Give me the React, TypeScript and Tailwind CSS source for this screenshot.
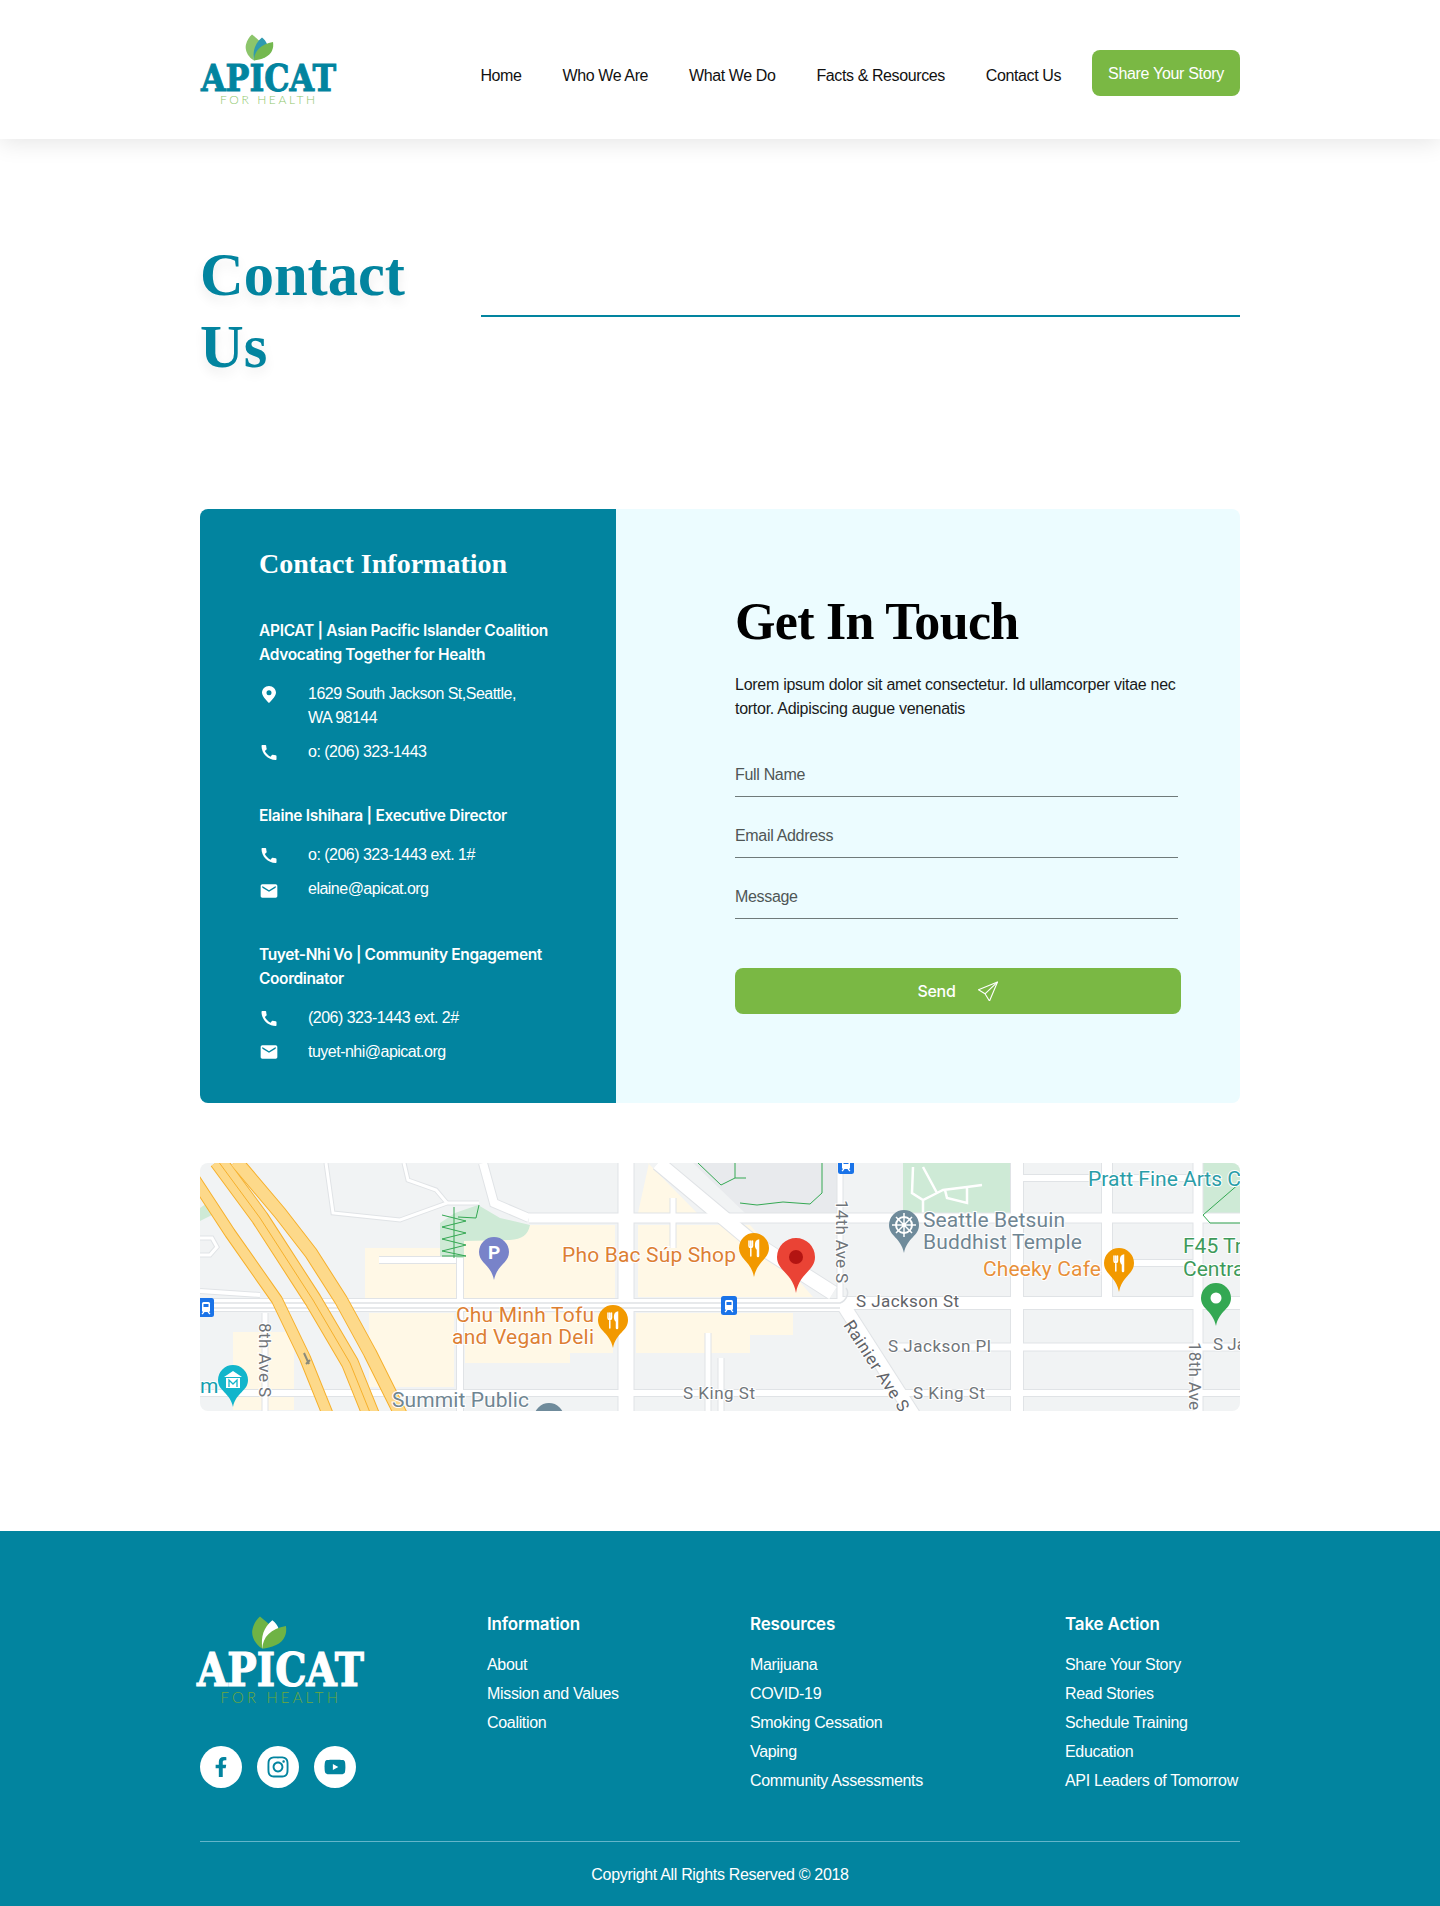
import { FaFacebookF, FaInstagram, FaYoutube } from "react-icons/fa";
import { MdCall, MdEmail } from "react-icons/md";

const NAV = ["Home", "Who We Are", "What We Do", "Facts & Resources", "Contact Us"];

const FOOTER_COLUMNS = [
  { title: "Information", links: ["About", "Mission and Values", "Coalition"] },
  { title: "Resources", links: ["Marijuana", "COVID-19", "Smoking Cessation", "Vaping", "Community Assessments"] },
  { title: "Take Action", links: ["Share Your Story", "Read Stories", "Schedule Training", "Education", "API Leaders of Tomorrow"] },
];

const Logo = ({ footer = false }: { footer?: boolean }) => (
  <svg viewBox="0 0 140 72" className={footer ? "w-[174px] h-[89px]" : "w-[140px] h-[72px]"}>
    <path d="M55 26.5C49 23 45.500 16 47 10.500C48 6.500 50 3 53 .5C56 3 60 6 62 8.500C57 13 54 19 55 26.500Z" fill={footer ? "#6fb345" : "#8cc56b"} />
    <path d="M55 26.500C53.500 17 56 9 63 3.500C65.500 5.500 67 7.500 68 10C62 14 57.500 20 55 26.500Z" fill={footer ? "#ffffff" : "#2f9ab0"} />
    <path d="M55 26.500C55 17 62 10 74 8C75 14 73 20 66 23.500C62 25.500 58.500 26 55 26.500Z" fill={footer ? "#6fb345" : "#74b84f"} />
    <text
      x="2"
      y="56.500"
      textLength="135"
      lengthAdjust="spacingAndGlyphs"
      fontFamily="'DejaVu Serif', serif"
      fontWeight="700"
      fontSize="37"
      stroke={footer ? "#ffffff" : "#02849f"}
      strokeWidth="1"
      fill={footer ? "#ffffff" : "#02849f"}
    >
      APICAT
    </text>
    <text
      x="21"
      y="70"
      textLength="95"
      fontFamily="Lato, sans-serif"
      fontWeight="300"
      fontSize="12"
      fill={footer ? "#6fa83a" : "#8ec76b"}
    >
      FOR HEALTH
    </text>
  </svg>
);

const PinIcon = () => (
  <svg viewBox="0 0 14 17" className="w-[14px] h-[17px]" fill="white">
    <path
      fillRule="evenodd"
      d="M7 0C3 0 0 3 0 6.800C0 10.800 7 17 7 17C7 17 14 10.800 14 6.800C14 3 11 0 7 0ZM7 4.300A2.500 2.500 0 1 1 7 9.300A2.500 2.500 0 1 1 7 4.300Z"
    />
  </svg>
);

const InfoRow = ({ icon, children, className = "" }: { icon: React.ReactNode; children: React.ReactNode; className?: string }) => (
  <div className={`flex gap-[29px] ${className}`}>
    <div className="w-5 h-6 flex items-center justify-center shrink-0">{icon}</div>
    <div>{children}</div>
  </div>
);

const Phone = () => <MdCall size={21} color="white" />;
const Mail = ({ className = "" }: { className?: string }) => <MdEmail size={20} color="white" className={className} />;

const ContactInfo = () => (
  <div className="w-[416px] shrink-0 bg-[#02849f] text-white pl-[59px] pt-[37px] pr-[60px] text-base leading-6 tracking-[-0.032em]">
    <h3 className="font-['Liberation_Serif',serif] font-bold text-[28px] leading-9 tracking-normal">Contact Information</h3>
    <p className="mt-[37px] font-['Inter',sans-serif] font-semibold text-[15.5px] tracking-[-0.02em]">
      APICAT | Asian Pacific Islander Coalition Advocating Together for Health
    </p>
    <InfoRow icon={<PinIcon />} className="mt-[15px]">
      1629 South Jackson St,Seattle,
      <br />
      WA 98144
    </InfoRow>
    <InfoRow icon={<Phone />} className="mt-[10px]">o: (206) 323-1443</InfoRow>

    <p className="mt-[40px] font-['Inter',sans-serif] font-semibold text-[15.5px] tracking-[-0.02em]">
      Elaine Ishihara | Executive Director
    </p>
    <InfoRow icon={<Phone />} className="mt-[15px]">o: (206) 323-1443 ext. 1#</InfoRow>
    <InfoRow icon={<Mail className="mt-1" />} className="mt-[10px]">elaine@apicat.org</InfoRow>

    <p className="mt-[42px] font-['Inter',sans-serif] font-semibold text-[15.5px] tracking-[-0.025em]">
      Tuyet-Nhi Vo | Community Engagement Coordinator
    </p>
    <InfoRow icon={<Phone />} className="mt-[15px]">(206) 323-1443 ext. 2#</InfoRow>
    <InfoRow icon={<Mail />} className="mt-[10px]">tuyet-nhi@apicat.org</InfoRow>
  </div>
);

const Field = ({ label }: { label: string }) => (
  <div className="h-[61px] border-b border-[#6f7a7a] flex items-end pb-[9px] text-[#4f5656] text-base leading-6 tracking-[-0.02em]">
    {label}
  </div>
);

const ContactForm = () => (
  <div className="flex-1 bg-[#ecfcff] pl-[119px] pt-[80px]">
    <h2 className="font-['Liberation_Serif',serif] font-bold text-[52px] leading-[66px] text-black tracking-[-0.7px]">Get In Touch</h2>
    <p className="mt-[18px] w-[445px] text-base leading-6 text-[#1a1a1a] tracking-[-0.017em]">
      Lorem ipsum dolor sit amet consectetur. Id ullamcorper vitae nec tortor. Adipiscing augue venenatis
    </p>
    <div className="w-[443px] mt-[15px]">
      <Field label="Full Name" />
      <Field label="Email Address" />
      <Field label="Message" />
    </div>
    <button className="mt-[49px] w-[446px] h-[46px] rounded-lg bg-[#7ab844] text-white flex items-center justify-center gap-[23px] font-['Inter',sans-serif] font-medium text-base tracking-[-0.02em]">
      Send
      <svg viewBox="0 0 20 20" className="w-5 h-5" fill="none" stroke="white" strokeWidth="1.100" strokeLinejoin="round">
        <path d="M19.500 1L.500 8.800L7 12.800L11.500 20Z" />
        <path d="M19.500 1L7 12.800" />
      </svg>
    </button>
  </div>
);

type Road = { d: string; w: number };

const ROADS: Road[] = [
  { d: "M0 142H640", w: 12 },
  { d: "M640 140H1040", w: 12 },
  { d: "M0 230H1040", w: 6 },
  { d: "M426 0V248", w: 15 },
  { d: "M260 95V248", w: 6 },
  { d: "M458 0L550 77L633 130", w: 14 },
  { d: "M329 55H1040", w: 9 },
  { d: "M283 0L294 40L329 55", w: 8 },
  { d: "M817 0V248", w: 12 },
  { d: "M907 0V135", w: 10 },
  { d: "M998 0V248", w: 9 },
  { d: "M640 137L720 262", w: 13 },
  { d: "M690 184H1040", w: 7 },
  { d: "M817 15H1000", w: 6 },
  { d: "M640 0V137", w: 5 },
  { d: "M907 100H998", w: 6 },
  { d: "M179 97H256", w: 6 },
  { d: "M65 150V248", w: 5 },
  { d: "M0 128L60 132", w: 4 },
  { d: "M126 0L133 50L200 57L247 40L279 40", w: 3 },
  { d: "M204 0L208 17L236 27L247 40", w: 3 },
  { d: "M0 75H12L17 84L10 92H0", w: 3 },
  { d: "M473 35V85", w: 5 },
  { d: "M508 170V248", w: 5 },
  { d: "M521 195V248", w: 5 },
];

const BEIGE = [
  "M165 85H256V137H165Z",
  "M263 62H415V137H263Z",
  "M438 62H550L613 134H438Z",
  "M449 0L438 50H497L448 0Z",
  "M169 150H254V224H169Z",
  "M265 150H413V190H370V200H265Z",
  "M436 150H593V172H550V190H436V150Z",
  "M33 169H94V247H33Z",
];

const HIGHWAYS = [
  { d: "M36 -2L80 50L111 90L141 137L170 190L201 252", w: 12 },
  { d: "M18 -2L60 55L113 137L150 200L171 252", w: 16 },
  { d: "M-6 15L30 70L77 137L105 195L128 252", w: 10 },
];

type Label = { t: string; x: number; y: number; s: number; c: string; w?: number; r?: number };

const ORANGE = "#dd7f33";
const SLATE = "#6f8592";
const STREET = "#70757a";

const LABELS: Label[] = [
  { t: "Pho Bac Súp Shop", x: 362, y: 99, s: 21, c: ORANGE, w: 174 },
  { t: "Chu Minh Tofu", x: 256, y: 159, s: 21, c: ORANGE, w: 138 },
  { t: "and Vegan Deli", x: 252, y: 181, s: 21, c: ORANGE, w: 142 },
  { t: "Summit Public", x: 192, y: 244, s: 21, c: SLATE, w: 137 },
  { t: "m", x: 0, y: 230, s: 21, c: "#129eaf" },
  { t: "8th Ave S", x: 59, y: 160, s: 17, c: STREET, w: 74, r: 90 },
  { t: "S King St", x: 483, y: 236, s: 17, c: STREET, w: 72 },
  { t: "Pratt Fine Arts Center", x: 888, y: 23, s: 21, c: "#2a9da8" },
  { t: "Seattle Betsuin", x: 723, y: 64, s: 21, c: SLATE, w: 142 },
  { t: "Buddhist Temple", x: 723, y: 86, s: 21, c: SLATE, w: 159 },
  { t: "Cheeky Cafe", x: 783, y: 113, s: 21, c: "#e8903a", w: 118 },
  { t: "F45 Training", x: 983, y: 90, s: 21, c: "#3d9a5a" },
  { t: "Central", x: 983, y: 113, s: 21, c: "#3d9a5a" },
  { t: "14th Ave S", x: 636, y: 37, s: 17, c: STREET, w: 83, r: 90 },
  { t: "S Jackson St", x: 656, y: 144, s: 17, c: "#5f6368", w: 103 },
  { t: "S Jackson Pl", x: 688, y: 189, s: 17, c: STREET, w: 103 },
  { t: "S King St", x: 713, y: 236, s: 17, c: STREET, w: 72 },
  { t: "Rainier Ave S", x: 643, y: 162, s: 17, c: "#5f6368", w: 105, r: 57 },
  { t: "18th Ave S", x: 989, y: 179, s: 17, c: STREET, w: 83, r: 90 },
  { t: "S Jackson", x: 1013, y: 187, s: 17, c: STREET },
];

const DropPin = ({ x, y, r, tip, fill, children }: { x: number; y: number; r: number; tip: number; fill: string; children?: React.ReactNode }) => (
  <g>
    <path
      d={`M${x} ${tip}C${x - 3} ${tip - (tip - y) * 0.55} ${x - r} ${y + r * 0.75} ${x - r} ${y}A${r} ${r} 0 1 1 ${x + r} ${y}C${x + r} ${y + r * 0.75} ${x + 3} ${tip - (tip - y) * 0.55} ${x} ${tip}Z`}
      fill={fill}
    />
    {children}
  </g>
);

const Fork = ({ x, y }: { x: number; y: number }) => (
  <g stroke="white" fill="none" strokeLinecap="round">
    <path d={`M${x - 5} ${y - 7}V${y - 2}C${x - 5} ${y} ${x - 1.500} ${y} ${x - 1.500} ${y - 2}V${y - 7}M${x - 3.200} ${y - 7}V${y + 8}`} strokeWidth="1.500" />
    <path d={`M${x + 4} ${y + 8}V${y - 7}C${x + 1.500} ${y - 6} ${x + 1.500} ${y} ${x + 4} ${y + 1}`} strokeWidth="2.500" />
  </g>
);

const Transit = ({ x, y }: { x: number; y: number }) => (
  <g>
    <rect x={x - 8} y={y - 9} width="16" height="19" rx="2.500" fill="#1a73e8" />
    <rect x={x - 4} y={y - 5} width="8" height="10" rx="1.500" fill="white" />
    <rect x={x - 2.500} y={y - 3} width="5" height="3" fill="#1a73e8" />
    <path d={`M${x - 4} ${y + 7}L${x - 2} ${y + 5}M${x + 4} ${y + 7}L${x + 2} ${y + 5}`} stroke="white" strokeWidth="1.200" />
  </g>
);

const MapView = () => (
  <div className="mt-[60px] h-[248px] rounded-lg overflow-hidden">
    <svg viewBox="0 0 1040 248" className="block w-full h-full" fontFamily="Roboto, sans-serif">
      <rect width="1040" height="248" fill="#f1f3f4" />
      <path d="M493 0L545 50H637V0Z" fill="#e8eaed" />
      {BEIGE.map((d) => (
        <path key={d} d={d} fill="#fff8e6" />
      ))}
      {/* parks */}
      <path d="M240 60L255 50L278 42L300 55L330 62C328 72 322 76 310 77L264 78V95H240Z" fill="#ceead6" />
      <path d="M703 0H813V57H703Z" fill="#ceead6" />
      <path d="M1003 0H1040V60H1003Z" fill="#ceead6" />
      <path d="M0 45L10 38L16 50L0 58Z" fill="#ceead6" />
      <path d="M713 4L712 30L723 37L737 30L743 27L767 24L782 22M723 4L737 30M723 37V57M745 27L747 35L767 40V24" stroke="white" strokeWidth="2.500" fill="none" />
      {ROADS.map((r) => (
        <path key={r.d} d={r.d} stroke="#e0e3e6" strokeWidth={r.w + 2} fill="none" />
      ))}
      {ROADS.map((r) => (
        <path key={r.d + "w"} d={r.d} stroke="white" strokeWidth={r.w} fill="none" />
      ))}
      <path d="M0 140H640C646 138 650 130 646 125M0 145H640" stroke="#dfe2e5" strokeWidth="1.500" fill="none" />
      {/* green trails */}
      <path d="M540 40L557 42L583 39L610 41L622 30V0M498 0L521 22L535 15V0M535 15H546" stroke="#34a853" strokeWidth="1" fill="none" />
      <path d="M1040 20L1003 52L1010 60H1040" stroke="#34a853" strokeWidth="1" fill="none" />
      <path d="M242 52L266 58L242 64L266 70L242 76L266 82L242 88L266 93L242 93M254 44V95M258 54L276 55L279 42" stroke="#34a853" strokeWidth="1" fill="none" />
      {/* freeway */}
      {HIGHWAYS.map((h) => (
        <path key={h.d} d={h.d} stroke="#f6b02c" strokeWidth={h.w + 2} strokeLinejoin="round" fill="none" />
      ))}
      {HIGHWAYS.map((h) => (
        <path key={h.d + "y"} d={h.d} stroke="#fdd98a" strokeWidth={h.w} strokeLinejoin="round" fill="none" />
      ))}
      <path d={HIGHWAYS[1].d} stroke="#f6b02c" strokeWidth="1" fill="none" />
      <path d="M104 190L109 201M106 201L110 197" stroke="#8a8a7a" strokeWidth="2" fill="none" />
      {LABELS.map((l) => (
        <text
          key={l.t + l.x}
          x={l.x}
          y={l.y}
          fontSize={l.s}
          fill={l.c}
          textLength={l.w}
          stroke="white"
          strokeWidth="2"
          paintOrder="stroke"
          transform={l.r ? `rotate(${l.r} ${l.x} ${l.y})` : undefined}
        >
          {l.t}
        </text>
      ))}
      <DropPin x={294} y={89} r={15} tip={117} fill="#7883c9">
        <text x={294} y={96} fontSize="19" fontWeight="700" fill="white" textAnchor="middle">P</text>
      </DropPin>
      <DropPin x={413} y={157} r={15} tip={185} fill="#f29900"><Fork x={413} y={157} /></DropPin>
      <DropPin x={554} y={85} r={15} tip={114} fill="#f29900"><Fork x={554} y={85} /></DropPin>
      <DropPin x={919} y={100} r={15} tip={129} fill="#f29900"><Fork x={919} y={100} /></DropPin>
      <DropPin x={596} y={94} r={19} tip={130} fill="#ea4335">
        <circle cx={596} cy={94} r={7} fill="#b31412" />
      </DropPin>
      <DropPin x={704} y={62} r={15} tip={90} fill="#6f8b9b">
        <circle cx={704} cy={62} r={8} fill="none" stroke="white" strokeWidth="2" />
        <path d="M704 50V74M692 62H716M696 54L712 70M712 54L696 70" stroke="white" strokeWidth="1.500" />
      </DropPin>
      <DropPin x={1016} y={135} r={15} tip={163} fill="#34a853">
        <circle cx={1016} cy={135} r={5.500} fill="white" />
      </DropPin>
      <DropPin x={33} y={217} r={15} tip={244} fill="#12b5cb">
        <path d="M24 214L33 208L42 214ZM26 215H40V225H26Z" fill="white" />
        <path d="M29 224V217L33 221L37 217V224" stroke="#12b5cb" strokeWidth="1.300" fill="none" />
      </DropPin>
      <DropPin x={349} y={255} r={15} tip={280} fill="#6f8b9b">
        <path d="M339 253L349 248L359 253L349 258Z" fill="white" />
      </DropPin>
      <Transit x={6} y={144} />
      <Transit x={529} y={142} />
      <Transit x={646} y={1} />
    </svg>
  </div>
);

const Footer = () => (
  <footer className="mt-[120px] h-[376px] bg-[#02849f] text-white">
    <div className="mx-auto w-[1040px] pt-[81px]">
      <div className="grid grid-cols-[287px_263px_315px_1fr] h-[230px] border-b border-[#63b6cb]">
        <div>
          <div className="-ml-[6px] mt-[4px]">
            <Logo footer />
          </div>
          <div className="mt-[41px] flex gap-[15px]">
            <a className="w-[42px] h-[42px] rounded-full bg-white flex items-center justify-center text-[#02849f]"><FaFacebookF size={20} /></a>
            <a className="w-[42px] h-[42px] rounded-full bg-white flex items-center justify-center text-[#02849f]"><FaInstagram size={24} /></a>
            <a className="w-[42px] h-[42px] rounded-full bg-white flex items-center justify-center text-[#02849f]"><FaYoutube size={22} /></a>
          </div>
        </div>
        {FOOTER_COLUMNS.map((col) => (
          <div key={col.title}>
            <h4 className="font-['Inter',sans-serif] font-semibold text-[17px] leading-6 tracking-[-0.01em]">{col.title}</h4>
            <ul className="mt-[17px] flex flex-col gap-[5px] text-base leading-6 tracking-[-0.02em]">
              {col.links.map((link) => (
                <li key={link} className="whitespace-nowrap">{link}</li>
              ))}
            </ul>
          </div>
        ))}
      </div>
      <p className="mt-[21px] text-center text-base leading-6 tracking-[-0.02em]">Copyright All Rights Reserved © 2018</p>
    </div>
  </footer>
);

export default function App() {
  return (
    <div className="w-[1440px] font-['Liberation_Sans',Arial,sans-serif] bg-white">
      <header className="relative h-[139px] bg-white shadow-[0_4px_22px_rgba(0,0,0,0.1)]">
        <div className="mx-auto w-[1040px] flex items-start">
          <div className="mt-[34px] -ml-px">
            <Logo />
          </div>
          <nav className="ml-auto mt-[50px] flex items-center gap-[41px]">
            {NAV.map((item) => (
              <a key={item} className="pt-[6px] text-base leading-6 text-[#111] tracking-[-0.025em]">{item}</a>
            ))}
            <a className="w-[148px] h-[46px] ml-[-10px] pt-px rounded-lg bg-[#7ab844] flex items-center justify-center text-white text-base leading-6 tracking-[-0.02em]">
              Share Your Story
            </a>
          </nav>
        </div>
      </header>

      <main className="mx-auto w-[1040px]">
        <section className="mt-[100px] flex items-center">
          <h1 className="w-[281px] shrink-0 font-['Liberation_Serif',serif] font-bold text-[60.5px] leading-[72px] text-[#02849f] [text-shadow:0_6px_12px_rgba(0,0,0,0.08)]">
            Contact Us
          </h1>
          <div className="flex-1 h-0.5 mt-[10px] bg-[#02849f]" />
        </section>

        <section className="mt-[126px] h-[594px] rounded-lg overflow-hidden flex">
          <ContactInfo />
          <ContactForm />
        </section>

        <MapView />
      </main>

      <Footer />
    </div>
  );
}
